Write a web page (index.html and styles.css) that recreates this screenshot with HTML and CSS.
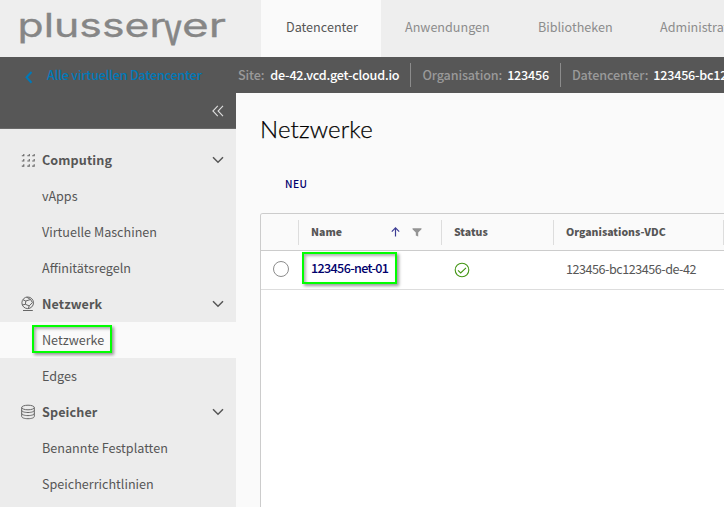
FILE: index.html
```html
<!DOCTYPE html>
<html lang="de">
<head>
<meta charset="utf-8">
<title>Netzwerke</title>
<link rel="stylesheet" href="styles.css">
</head>
<body>
<header class="top">
  <div class="brand">
    <svg width="236" height="57" viewBox="0 0 236 57"><text class="wordmark" y="37.3"><tspan x="17.5" textLength="148" lengthAdjust="spacingAndGlyphs">plusser</tspan><tspan class="wordmark-v" x="164" y="44.5" textLength="18" lengthAdjust="spacingAndGlyphs">v</tspan><tspan x="182" y="37.3" textLength="44" lengthAdjust="spacingAndGlyphs">er</tspan></text></svg>
  </div>
  <nav class="tabs">
    <a class="tab active">Datencenter</a>
    <a class="tab">Anwendungen</a>
    <a class="tab">Bibliotheken</a>
    <a class="tab">Administration</a>
  </nav>
</header>
<div class="context">
  <a class="back"><svg width="8" height="13" viewBox="0 0 8 13"><path d="M6.5 1 1.5 6.3l5 5.4" fill="none" stroke="#0079b8" stroke-width="2"/></svg><span>Alle virtuellen Datencenter</span></a>
  <div class="crumb"><span>Site:</span><b>de-42.vcd.get-cloud.io</b></div>
  <div class="crumb"><span>Organisation:</span><b>123456</b></div>
  <div class="crumb"><span>Datencenter:</span><b>123456-bc123456-de-42</b></div>
</div>
<div class="main">
  <aside class="side">
    <div class="collapse"><svg width="12" height="12" viewBox="0 0 12 12"><path d="M5.8.8.9 6l4.9 5.2M11 .8 6.1 6l4.9 5.2" fill="none" stroke="#ddd" stroke-width="1.1"/></svg></div>
    <div class="menu">
      <div class="group">
        <svg class="icon" width="16" height="16" viewBox="0 0 16 16"><g fill="none" stroke="#666" stroke-width="1.1"><path d="M1.8 3.8h2V1.9M7.3 3.8h2V1.9M12.2 3.8h2V1.9M1.8 9h2V7.1M7.3 9h2V7.1M12.2 9h2V7.1M1.8 14.1h2v-1.9M7.3 14.1h2v-1.9M12.2 14.1h2v-1.9"/></g></svg>
        <span>Computing</span>
        <svg class="caret" width="12" height="8" viewBox="0 0 12 8"><path d="m1 1.2 5 5 5-5"/></svg>
      </div>
      <a class="item">vApps</a>
      <a class="item">Virtuelle Maschinen</a>
      <a class="item">Affinitätsregeln</a>
      <div class="group">
        <svg class="icon" width="16" height="16" viewBox="0 0 16 16"><g fill="none" stroke="#666" stroke-width="1"><circle cx="7.7" cy="6.8" r="5.8"/><path d="M3 3.8 5.8 5l4.8-1.5M5.8 5l-.4 3.3L2.2 9M5.4 8.3l3.8 1.6 3.2-3.3-1.8-3.1M9.2 9.9l-.8 2.5M6.7 1.2l3.9 2.3M3 14.5h9.8"/></g></svg>
        <span>Netzwerk</span>
        <svg class="caret" width="12" height="8" viewBox="0 0 12 8"><path d="m1 1.2 5 5 5-5"/></svg>
      </div>
      <a class="item active"><span class="mark mark-side">Netzwerke</span></a>
      <a class="item">Edges</a>
      <div class="group">
        <svg class="icon" width="16" height="16" viewBox="0 0 16 16"><g fill="none" stroke="#666" stroke-width="1"><ellipse cx="8" cy="3.5" rx="6.3" ry="2.3"/><path d="M1.7 3.5v9c0 1.3 2.8 2.2 6.3 2.2s6.3-.9 6.3-2.2v-9M1.7 6.3C1.7 7.6 4.5 8.5 8 8.5s6.3-.9 6.3-2.2M1.7 9.4c0 1.3 2.8 2.2 6.3 2.2s6.3-.9 6.3-2.2"/></g></svg>
        <span>Speicher</span>
        <svg class="caret" width="12" height="8" viewBox="0 0 12 8"><path d="m1 1.2 5 5 5-5"/></svg>
      </div>
      <a class="item">Benannte Festplatten</a>
      <a class="item">Speicherrichtlinien</a>
    </div>
  </aside>
  <main class="content">
    <h1>Netzwerke</h1>
    <button class="new">NEU</button>
    <div class="grid">
      <div class="row head">
        <div class="cell"></div>
        <div class="cell name"><span>Name</span>
          <svg class="sort" width="9" height="10" viewBox="0 0 9 10"><path d="M4.5 9.6V1M.8 4.6l3.7-3.7 3.7 3.7" fill="none" stroke="#3c3c94" stroke-width="1.2"/></svg>
          <svg width="10" height="9" viewBox="0 0 10 9"><path d="M.5.3h9v1L6.2 4.6v3.8l-2.4-1V4.6L.5 1.3z" fill="#949494"/></svg>
        </div>
        <div class="cell">Status</div>
        <div class="cell">Organisations-VDC</div>
        <div class="cell"></div>
      </div>
      <div class="row">
        <div class="cell pick"><i class="radio"></i></div>
        <div class="cell link"><span class="mark mark-row">123456-net-01</span></div>
        <div class="cell"><svg class="ok" width="16" height="16" viewBox="0 0 16 16"><g fill="none" stroke="#439514" stroke-width="1.1"><circle cx="8" cy="8" r="6.8"/><path d="m4 8.3 2.7 2.6L12 5.8"/></g></svg></div>
        <div class="cell vdc">123456-bc123456-de-42</div>
        <div class="cell"></div>
      </div>
    </div>
  </main>
</div>
</body>
</html>
```
FILE: styles.css
```css
* { box-sizing: border-box; }
body {
  margin: 0; width: 724px; height: 507px; overflow: hidden;
  display: flex; flex-direction: column;
  background: #fafafa; color: #565656;
  font: 400 12.6px/20px "Noto Sans CJK SC", "Noto Sans", sans-serif;
}
svg { display: block; flex: none; }
.top { display: flex; height: 57px; background: #eee; flex: none; }
.brand { width: 261px; flex: none; }
.wordmark { font: 400 33px "Inter", sans-serif; fill: #868686; stroke: #868686; stroke-width: .3px; }
.wordmark-v { font-size: 43px; stroke-width: .8px; }
.tabs { display: flex; flex: 1; min-width: 0; overflow: hidden; }
.tab { padding: 17px 24px 0 25px; width: 120px; color: #8c8c8c; white-space: nowrap; flex: none; }
.tab:nth-child(2) { width: 132px; padding-left: 24px; }
.tab:nth-child(3) { width: 123px; }
.tab:nth-child(4) { padding-left: 24px; }
.tab.active { background: #fafafa; color: #565656; }
.context { display: flex; align-items: center; height: 36px; background: #575757; flex: none; white-space: nowrap; font-weight: 500; overflow: hidden; }
.back { display: flex; align-items: center; gap: 14px; width: 238px; padding-left: 25px; color: #0079b8; flex: none; letter-spacing: -.2px; }
.back svg { margin-top: 4px; }
.crumb { display: flex; align-items: center; gap: 6px; height: 24px; color: #9a9a9a; flex: none; letter-spacing: -.12px; }
.crumb b { color: #fff; font-weight: 500; letter-spacing: -.22px; }
.crumb + .crumb { border-left: 1px solid #8c8c8c; margin-left: 11px; padding-left: 11px; gap: 5px; }
.main { display: flex; flex: 1; min-height: 0; }
.side { width: 236px; background: #ececec; flex: none; }
.collapse { height: 36px; background: #575757; display: flex; justify-content: flex-end; align-items: center; padding-right: 12px; border-bottom: 1px solid #6a6a6a; }
.menu { padding-top: 13px; }
.group { display: flex; align-items: center; height: 36px; padding: 0 12px 0 20px; font-weight: 700; letter-spacing: .1px; }
.icon { margin-right: 6px; }
.caret { margin-left: auto; fill: none; stroke: #565656; stroke-width: 1.5; }
.item { display: flex; align-items: center; height: 36px; padding-left: 42px; }
.item.active { background: #fafafa; }
.mark { border: 2px solid #0f0; box-shadow: 2px 2px 3px rgba(0,0,0,.4), inset 2px 2px 3px rgba(0,0,0,.3); flex: none; }
.mark-side { display: flex; align-items: center; width: 80px; height: 28px; margin: -2px 0 0 -10px; padding: 2px 0 0 8px; }
.content { flex: 1; min-width: 0; padding-left: 24px; display: flex; flex-direction: column; align-items: flex-start; overflow: hidden; }
h1 { margin: 20px 0 0; font: 300 24px/32px Lato, sans-serif; color: #000; letter-spacing: .15px; -webkit-text-stroke: .25px #000; }
.new { margin: 29px 0 0 25px; padding: 0; border: 0; background: none; font: 500 10.2px/20px "Noto Sans CJK SC", sans-serif; letter-spacing: .5px; color: #00006c; }
.grid { width: 520px; margin-top: 19px; flex: 1; border: 1px solid #ccc; border-bottom: 0; border-radius: 3px 0 0; background: #fff; overflow: hidden; }
.row { display: grid; grid-template-columns: 37px 143px 112px 170px 60px; height: 39px; align-items: center; border-bottom: 1px solid #ddd; }
.head { height: 37px; background: #fafafa; font-size: 10.5px; font-weight: 900; border-color: #ccc; }
.cell { padding-left: 13px; white-space: nowrap; }
.head .cell + .cell { height: 25px; line-height: 23px; border-left: 1px solid #ddd; padding-left: 12px; }
.head .name { display: flex; align-items: center; gap: 12px; padding-right: 19px; }
.head .name span { margin-top: -2px; }
.name .sort { margin-left: auto; }
.pick { padding-left: 12px; }
.radio { display: block; width: 16px; height: 16px; margin-top: -2px; border: 1px solid #8c8c8c; border-radius: 50%; background: #fff; }
.link { color: #00006c; font-weight: 500; padding-left: 4px; letter-spacing: -.65px; }
.mark-row { display: flex; align-items: center; width: 95px; height: 32px; padding-left: 7px; margin-top: -4px; }
.vdc { letter-spacing: -.48px; padding-bottom: 2px; }
```
